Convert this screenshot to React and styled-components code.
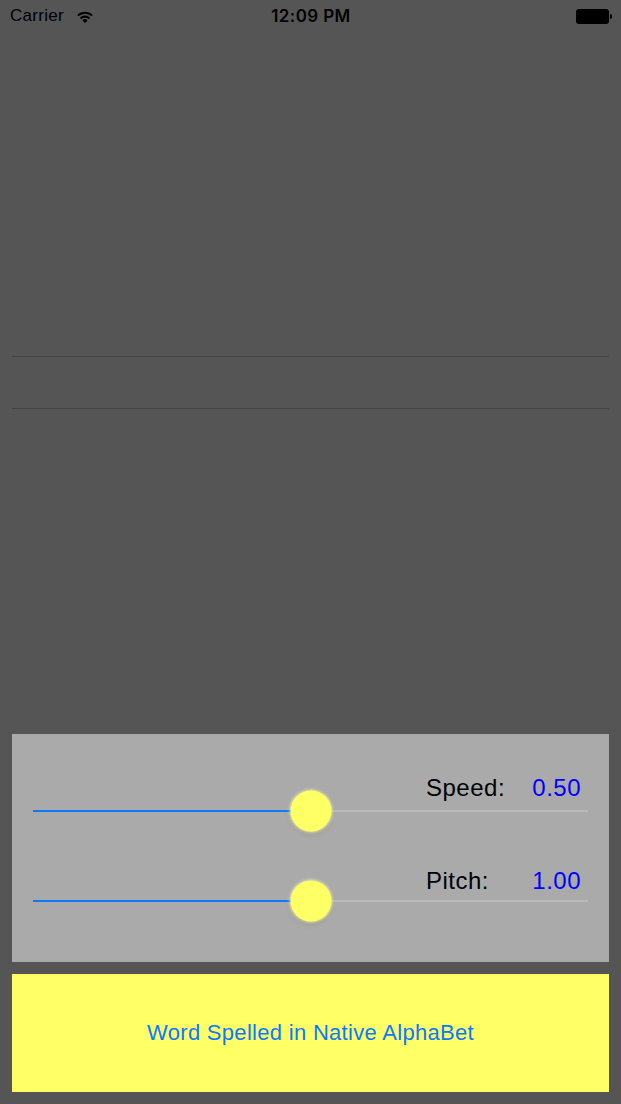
import React from "react";
import styled, { createGlobalStyle } from "styled-components";

const GlobalStyle = createGlobalStyle`
  html, body {
    margin: 0;
    padding: 0;
    background: #555555;
  }
  body {
    font-family: "Liberation Sans", Arial, sans-serif;
  }
`;

const Page = styled.div`
  width: 621px;
  height: 1104px;
  background: #555555;
  display: flex;
  flex-direction: column;
  box-sizing: border-box;
  padding-bottom: 12px;
  overflow: hidden;
`;

const StatusBar = styled.div`
  height: 32px;
  display: grid;
  grid-template-columns: 1fr auto 1fr;
  align-items: center;
  padding: 0 9px 0 10px;
  color: #000;
  font-size: 17px;
`;

const StatusLeft = styled.div`
  display: flex;
  align-items: center;
  gap: 13px;
  letter-spacing: 0.3px;
`;

const Time = styled.div`
  font-family: "Inter", "Liberation Sans", sans-serif;
  font-weight: 600;
  font-size: 17px;
  letter-spacing: 0.4px;
`;

const StatusRight = styled.div`
  display: flex;
  justify-content: flex-end;
  align-items: center;
`;

const BatteryBody = styled.div`
  width: 33px;
  height: 15px;
  background: #000;
  border-radius: 3px;
  box-sizing: border-box;
`;

const BatteryNub = styled.div`
  width: 2px;
  height: 5px;
  background: #000;
  border-radius: 0 2px 2px 0;
  margin-left: 1px;
`;

const InputArea = styled.div`
  margin: 324px 12px 0;
  height: 51px;
  border-top: 1px solid #444444;
  border-bottom: 1px solid #444444;
`;

const Panel = styled.div`
  margin: auto 12px 0;
  height: 228px;
  background: #aaaaaa;
  box-sizing: border-box;
  padding: 40px 21px 0;
`;

const SliderBlock = styled.div`
  margin-top: ${(p) => p.$top || 0}px;
`;

const LabelLine = styled.div`
  display: flex;
  justify-content: flex-end;
  align-items: baseline;
  height: 28px;
  line-height: 28px;
  font-size: 24px;
  letter-spacing: 0.5px;
  padding-right: 7px;
`;

const Label = styled.span`
  width: 105px;
  color: #000;
`;

const Value = styled.span`
  width: 50px;
  text-align: right;
  color: #0000ff;
`;

const Track = styled.div`
  position: relative;
  height: 2px;
  margin-top: ${(p) => p.$gap}px;
  background: #b9b9b9;
`;

const Fill = styled.div`
  height: 2px;
  background: #0a7aff;
`;

const Thumb = styled.div`
  position: absolute;
  top: 50%;
  width: 41px;
  height: 41px;
  border-radius: 50%;
  background: #ffff66;
  transform: translate(-50%, -50%);
  box-shadow: 0 0 3px 1px rgba(255, 255, 170, 0.7), 0 3px 5px rgba(90, 90, 0, 0.18);
`;

const Button = styled.div`
  margin: 12px 12px 0;
  height: 118px;
  background: #ffff66;
  display: flex;
  align-items: center;
  justify-content: center;
  color: #0a7aff;
  font-size: 22px;
  letter-spacing: 0.3px;
`;

function Slider({ label, value, fraction, top, gap }) {
  return (
    <SliderBlock $top={top}>
      <LabelLine>
        <Label>{label}</Label>
        <Value>{value}</Value>
      </LabelLine>
      <Track $gap={gap}>
        <Fill style={{ width: `${fraction * 100}%` }} />
        <Thumb style={{ left: `${fraction * 100}%` }} />
      </Track>
    </SliderBlock>
  );
}

function Wifi() {
  return (
    <svg width="16" height="13" viewBox="0 0 16 13">
      <path d="M0.9 5.6 A10.3 10.3 0 0 1 15.1 5.6" fill="none" stroke="#000" strokeWidth="2.1" />
      <path d="M3.6 8.4 A6.4 6.4 0 0 1 12.4 8.4" fill="none" stroke="#000" strokeWidth="2.1" />
      <path d="M8 13 L5.4 10.4 A3.7 3.7 0 0 1 10.6 10.4 Z" fill="#000" />
    </svg>
  );
}

export default function App() {
  return (
    <>
      <GlobalStyle />
      <Page>
        <StatusBar>
          <StatusLeft>
            <span>Carrier</span>
            <Wifi />
          </StatusLeft>
          <Time>12:09 PM</Time>
          <StatusRight>
            <BatteryBody />
            <BatteryNub />
          </StatusRight>
        </StatusBar>
        <InputArea />
        <Panel>
          <Slider label="Speed:" value="0.50" fraction={0.5} top={0} gap={8} />
          <Slider label="Pitch:" value="1.00" fraction={0.5} top={55} gap={5} />
        </Panel>
        <Button>Word Spelled in Native AlphaBet</Button>
      </Page>
    </>
  );
}
